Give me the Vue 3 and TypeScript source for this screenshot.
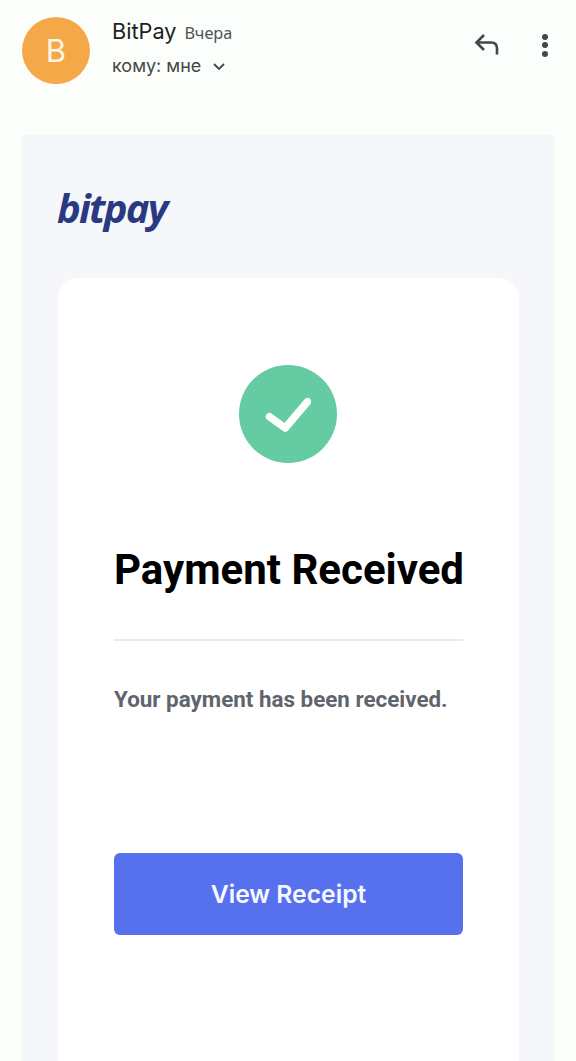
<script setup lang="ts">
const sender = "BitPay";
</script>

<template>
  <div class="page">
    <header class="mail-head">
      <div class="avatar">B</div>
      <div class="meta">
        <div class="from">
          <span class="name">{{ sender }}</span>
          <span class="date">Вчера</span>
        </div>
        <div class="to">
          <span>кому: мне</span>
          <svg class="chev" width="14" height="9" viewBox="0 0 14 9" fill="none">
            <path d="M2 2l5 5 5-5" stroke="#444746" stroke-width="1.8" />
          </svg>
        </div>
      </div>
      <div class="actions">
        <svg width="26" height="24" viewBox="0 0 26 24" fill="none">
          <path d="M10 2L2.500 9.500 10 17" stroke="#444746" stroke-width="2.600" />
          <path d="M3 9.500h14c4 0 6 2 6 6v6" stroke="#444746" stroke-width="2.600" />
        </svg>
        <div class="dots"><i></i><i></i><i></i></div>
      </div>
    </header>

    <section class="mail-body">
      <div class="logo">bitpay</div>
      <div class="card">
        <div class="check">
          <svg width="46" height="36" viewBox="0 0 46 36" fill="none">
            <path d="M4.500 20.700L20.200 32 42.500 5.700" stroke="#fff" stroke-width="7.500" stroke-linecap="round" stroke-linejoin="round" />
          </svg>
        </div>
        <h1>Payment Received</h1>
        <hr />
        <p>Your payment has been received.</p>
        <a class="btn">View Receipt</a>
      </div>
    </section>
  </div>
</template>

<style>
html,
body {
  margin: 0;
  background: #fbfefa;
}
</style>

<style scoped>
.page {
  width: 576px;
  height: 1061px;
  overflow: hidden;
  background: #fbfefa;
  font-family: Roboto, "Liberation Sans", sans-serif;
  display: flex;
  flex-direction: column;
}

.mail-head {
  display: flex;
  align-items: flex-start;
  padding: 17px 28px 0 22px;
  height: 135px;
  box-sizing: border-box;
  flex: none;
}

.avatar {
  width: 68px;
  height: 67px;
  border-radius: 50%;
  background: #f4a847;
  color: #fdf6e8;
  font-family: Inter, "Noto Sans", sans-serif;
  font-size: 31px;
  display: flex;
  align-items: center;
  justify-content: center;
  flex: none;
}

.meta {
  margin-left: 22px;
  flex: 1;
  font-family: Inter, "Noto Sans", sans-serif;
}

.from {
  display: flex;
  align-items: baseline;
  gap: 8px;
  height: 28px;
}

.name {
  font-size: 21.700px;
  line-height: 28px;
  color: #1f1f1f;
}

.date {
  font-family: "Noto Sans", Inter, sans-serif;
  font-size: 16.300px;
  color: #505352;
}

.to {
  display: flex;
  align-items: center;
  gap: 11px;
  margin-top: 7px;
  font-size: 18px;
  line-height: 28px;
  color: #444746;
}

.actions {
  display: flex;
  align-items: center;
  gap: 42px;
  padding-top: 16px;
}

.dots {
  display: flex;
  flex-direction: column;
  gap: 2.500px;
}

.dots i {
  display: block;
  width: 6px;
  height: 6px;
  border-radius: 50%;
  background: #444746;
}

.mail-body {
  flex: 1;
  margin: 0 22px;
  background: #f5f7fb;
  padding: 44px 35px 0 36px;
  display: flex;
  flex-direction: column;
}

.logo {
  font-family: "Open Sans", Lato, sans-serif;
  font-weight: 700;
  font-style: italic;
  font-size: 40px;
  line-height: 58px;
  letter-spacing: -1.800px;
  margin-left: -1px;
  color: #2a3a82;
  height: 99px;
}

.card {
  flex: 1;
  background: #fff;
  border-radius: 20px 20px 0 0;
  padding: 87px 56px 0;
  display: flex;
  flex-direction: column;
}

.check {
  width: 98px;
  height: 98px;
  border-radius: 50%;
  background: #65cba3;
  align-self: center;
  margin-left: -1px;
  display: flex;
  align-items: center;
  justify-content: center;
}

h1 {
  margin: 83px 0 0;
  font-size: 42px;
  line-height: 48px;
  font-weight: 700;
  color: #000;
  text-align: center;
  white-space: nowrap;
}

hr {
  width: 100%;
  margin: 45px 0 0;
  border: 0;
  border-top: 2px solid #e9eaec;
}

p {
  margin: 44px 0 0;
  font-size: 22.400px;
  line-height: 28px;
  font-weight: 700;
  color: #60646d;
  white-space: nowrap;
}

.btn {
  margin-top: 140px;
  height: 82px;
  border-radius: 6px;
  background: #5771ee;
  color: #f5f8ff;
  font-family: Inter, Roboto, sans-serif;
  font-size: 24.700px;
  font-weight: 600;
  display: flex;
  align-items: center;
  justify-content: center;
}
</style>
